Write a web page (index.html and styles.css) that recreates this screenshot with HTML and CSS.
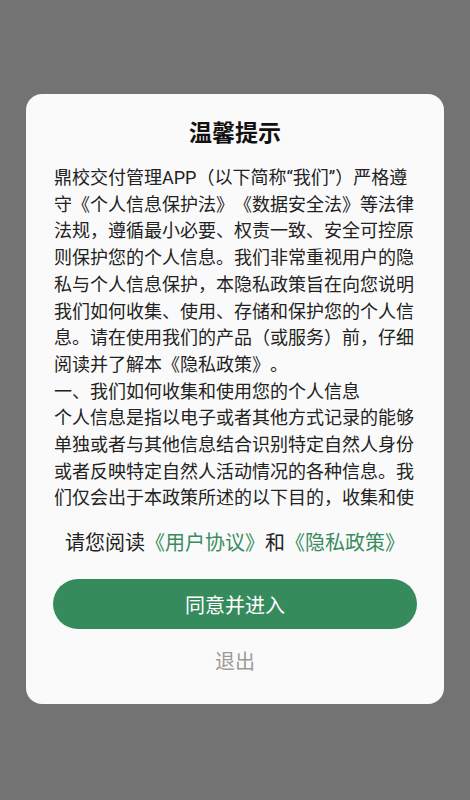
FILE: index.html
```html
<!DOCTYPE html>
<html lang="zh-CN">
<head>
    <meta charset="UTF-8">
    <meta name="viewport" content="width=device-width, initial-scale=1.0">
    <title>温馨提示</title>

    <link rel="stylesheet" href="styles.css">
</head>
    <body>
        <div class="dialog">
          <h3 class="title">温馨提示</h3>
          <div class="policy">
            <p>鼎校交付管理APP（以下简称“我们”）严格遵守《个人信息保护法》《数据安全法》等法律法规，遵循最小必要、权责一致、安全可控原则保护您的个人信息。我们非常重视用户的隐私与个人信息保护，本隐私政策旨在向您说明我们如何收集、使用、存储和保护您的个人信息。请在使用我们的产品（或服务）前，仔细阅读并了解本《隐私政策》。</p>
            <p>一、我们如何收集和使用您的个人信息</p>
            <p>个人信息是指以电子或者其他方式记录的能够单独或者与其他信息结合识别特定自然人身份或者反映特定自然人活动情况的各种信息。我们仅会出于本政策所述的以下目的，收集和使用您的个人信息：</p>
            <p>1. 账号注册与登录：当您注册、登录本应用时，我们会收集您的手机号码、账号名称，用于创建账号并完成身份验证。</p>
            <p>2. 交付管理服务：为向您提供项目交付、进度查询等功能，我们会收集您在使用过程中主动提交的信息。</p>
          </div>
          <div class="agree-line">请您阅读<a href="#" class="link">《用户协议》</a>和<a href="#" class="link">《隐私政策》</a></div>
          <button class="btn-agree">同意并进入</button>
          <button class="btn-exit">退出</button>
        </div>
</body>
</html>
```

FILE: styles.css
```css
html, body {
  margin: 0;
  height: 100%;
}

body {
  background-color: #737373;
  font-family: Roboto, "Noto Sans CJK SC", sans-serif;
  color: #222;
  overflow: hidden;
}

.dialog {
  width: 418px;
  box-sizing: border-box;
  margin: 94px 0 0 26px;
  padding: 25px 28px 28px;
  background-color: #fafafa;
  border-radius: 16px;
  display: flex;
  flex-direction: column;
  align-items: center;
}

.title {
  margin: 0 0 16px;
  font-size: 23px;
  line-height: 30px;
  font-weight: bold;
  color: #111;
}

.policy {
  width: 100%;
  height: 347px;
  overflow-y: auto;
  scrollbar-width: none;
  font-size: 18px;
  line-height: 26.7px;
  text-spacing-trim: space-all;
}

.policy p {
  margin: 0;
}

.agree-line {
  margin-top: 17px;
  font-size: 20px;
  line-height: 28px;
  text-spacing-trim: space-all;
}

.agree-line .link {
  color: #3a8c5f;
  text-decoration: none;
}

.btn-agree {
  margin-top: 22px;
  width: 364px;
  height: 50px;
  border: none;
  border-radius: 25px;
  background-color: #368b5d;
  color: #fff;
  font-family: inherit;
  font-size: 20px;
  cursor: pointer;
}

.btn-exit {
  margin-top: 19px;
  padding: 0;
  border: none;
  background: none;
  color: #9a9a9a;
  font-family: inherit;
  font-size: 20px;
  line-height: 28px;
  cursor: pointer;
}
```
